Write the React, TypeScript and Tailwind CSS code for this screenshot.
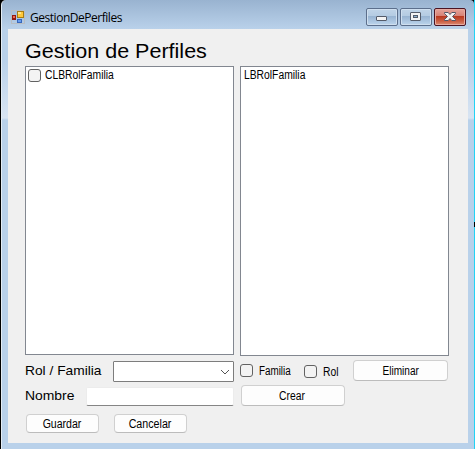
import React from "react";

const small = "font-['Liberation_Sans',Arial,sans-serif] text-[12px] leading-[14px] text-black whitespace-nowrap";
const label = "font-['Liberation_Sans',Arial,sans-serif] text-black whitespace-nowrap";

function CheckBox({ className = "" }: { className?: string }) {
  return <span className={`block h-[13px] w-[13px] shrink-0 rounded-[3px] border border-[#626262] bg-[#f3f3f3] ${className}`} />;
}

function Button({ text, className, textClassName }: { text: string; className: string; textClassName: string }) {
  return (
    <button className={`flex shrink-0 items-center justify-center rounded-[4px] border border-[#d0d0d0] border-b-[#bcbcbc] bg-[#fdfdfd] ${small} ${className}`}>
      <span className={`block ${textClassName}`}>{text}</span>
    </button>
  );
}

function FormIcon() {
  return (
    <svg className="mt-[9px] ml-[9px] h-[15px] w-[14px] shrink-0" viewBox="0 0 14 15" shapeRendering="crispEdges">
      <path d="M.5 1.5h13v13H.5z" fill="none" stroke="#b7bdc3" />
      <rect x="1" y="6" width="4" height="5" fill="#921b12" />
      <rect x="2" y="7" width="2" height="2" fill="#ef6b50" />
      <rect x="6" y="2" width="7" height="7" fill="#a87c12" />
      <rect x="7" y="3" width="5" height="5" fill="#ffc83a" />
      <rect x="7" y="3" width="3" height="2" fill="#ffe58b" />
      <rect x="6" y="10" width="5" height="4" fill="#3567bd" />
      <rect x="7" y="11" width="3" height="2" fill="#679cee" />
    </svg>
  );
}

function CaptionButton({ kind }: { kind: "min" | "max" | "close" }) {
  const tone =
    kind === "close"
      ? "border-[#4b1423] bg-[linear-gradient(#e5a39a_0%,#d78175_44%,#b9381f_46%,#c95d43_75%,#dc8c73_100%)] shadow-[inset_0_0_0_1px_#e6aaa0]"
      : "border-[#5c6f8c] bg-[linear-gradient(#c0d4e8_0%,#b4cbe2_44%,#98b4d2_46%,#abc5e0_75%,#bdd5ec_100%)] shadow-[inset_0_0_0_1px_#cfdfef]";
  return (
    <span className={`block h-[18px] w-8 rounded-[2px] border ${tone}`}>
      <svg className="h-4 w-[30px]" viewBox="0 0 30 16">
        {kind === "min" && <rect x="9.5" y="7.5" width="10" height="4" rx="0.5" fill="#f3f3f3" stroke="#545b69" />}
        {kind === "max" && (
          <>
            <rect x="9.5" y="3.5" width="10" height="8" rx="0.5" fill="#f3f3f3" stroke="#545b69" />
            <rect x="12.5" y="6.5" width="4" height="2" fill="#8cb0ce" stroke="#545b69" />
          </>
        )}
        {kind === "close" && (
          <path d="M9.5 3.5h3.7l1.8 2 1.8-2h3.7v1l-3 3 3 3v1h-3.7l-1.8-2-1.8 2H9.5v-1l3-3-3-3z" fill="#f2f2f2" stroke="#535666" />
        )}
      </svg>
    </span>
  );
}

export default function App() {
  return (
    <div className="flex h-[449px] w-[475px] overflow-hidden bg-black">
      <div className="ml-px flex w-[473px] shrink-0 flex-col rounded-tl-[5px] rounded-tr-[4px] border-l border-[#e4edf5] bg-[linear-gradient(#99b3d0_0px,#b9d1ea_29px,#b9d1ea_60px,#d8e4f2_118px,#b9d1ea_120px)]">
        <header className="flex h-[29px] shrink-0 items-start">
          <FormIcon />
          <span className="mt-[10px] ml-[5px] w-[336px] whitespace-nowrap font-['Open_Sans','Noto_Sans',sans-serif] text-[12px] leading-[16px] tracking-[-0.47px] text-black">GestionDePerfiles</span>
          <div className="mt-2 flex gap-[2px]">
            <CaptionButton kind="min" />
            <CaptionButton kind="max" />
            <CaptionButton kind="close" />
          </div>
        </header>
        <main className="ml-[6px] flex h-[414px] w-[460px] shrink-0 flex-col bg-[#f0f0f0] pl-[17px]">
          <h1 className={`h-[37px] origin-left scale-x-[1.05] pt-[10px] text-[20.5px] leading-[24px] ${label}`}>Gestion de Perfiles</h1>
          <div className="flex h-[290px] items-start gap-[6px]">
            <div className="flex h-[289px] w-[209px] items-start gap-[4px] border border-[#828790] bg-white pt-[2px] pl-[2px]">
              <CheckBox />
              <span className={`-mt-px block origin-left scale-x-[0.86] ${small}`}>CLBRolFamilia</span>
            </div>
            <div className="h-[290px] w-[209px] border border-[#828790] bg-white pt-px pl-[3px]">
              <div className={`origin-left scale-x-[0.86] ${small}`}>LBRolFamilia</div>
            </div>
          </div>
          <div className="mt-[4px] flex h-[21px] items-start">
            <span className={`mt-[3px] w-[88px] origin-left scale-x-[1.02] text-[13.5px] leading-4 ${label}`}>Rol / Familia</span>
            <div className="mt-px flex h-[21px] w-[121px] items-center justify-end rounded-[1px] border border-[#7d7d7d] bg-white pr-[3px]">
              <svg className="h-[6px] w-[10px]" viewBox="0 0 10 6"><path d="M1 1l4 4 4-4" fill="none" stroke="#555" /></svg>
            </div>
            <CheckBox className="mt-1 ml-[6px]" />
            <span className={`mt-1 ml-[6px] w-[45px] origin-left scale-x-[0.82] ${small}`}>Familia</span>
            <CheckBox className="mt-[5px]" />
            <span className={`mt-[5px] ml-[6px] w-[30px] origin-left scale-x-[0.86] ${small}`}>Rol</span>
            <Button text="Eliminar" className="h-[21px] w-[95px]" textClassName="scale-x-[0.84]" />
          </div>
          <div className="mt-[4px] flex h-[21px] items-start">
            <span className={`mt-[3px] w-[61px] origin-left scale-x-[1.03] text-[13.5px] leading-4 ${label}`}>Nombre</span>
            <div className="mt-[2px] h-[19px] w-[148px] rounded-[2px] border border-[#ececec] border-b-[#858585] bg-white" />
            <Button text="Crear" className="ml-[7px] h-[21px] w-[104px]" textClassName="-ml-[2px] scale-x-[0.86]" />
          </div>
          <div className="mt-2 ml-px flex gap-[15px]">
            <Button text="Guardar" className="h-[19px] w-[73px]" textClassName="-ml-px scale-x-[0.88]" />
            <Button text="Cancelar" className="h-[19px] w-[73px]" textClassName="-ml-px scale-x-[0.89]" />
          </div>
        </main>
      </div>
      <div className="relative w-px shrink-0 bg-[#22d2f4]">
        <span className="absolute top-[222px] right-0 h-[5px] w-px bg-black" />
      </div>
    </div>
  );
}
